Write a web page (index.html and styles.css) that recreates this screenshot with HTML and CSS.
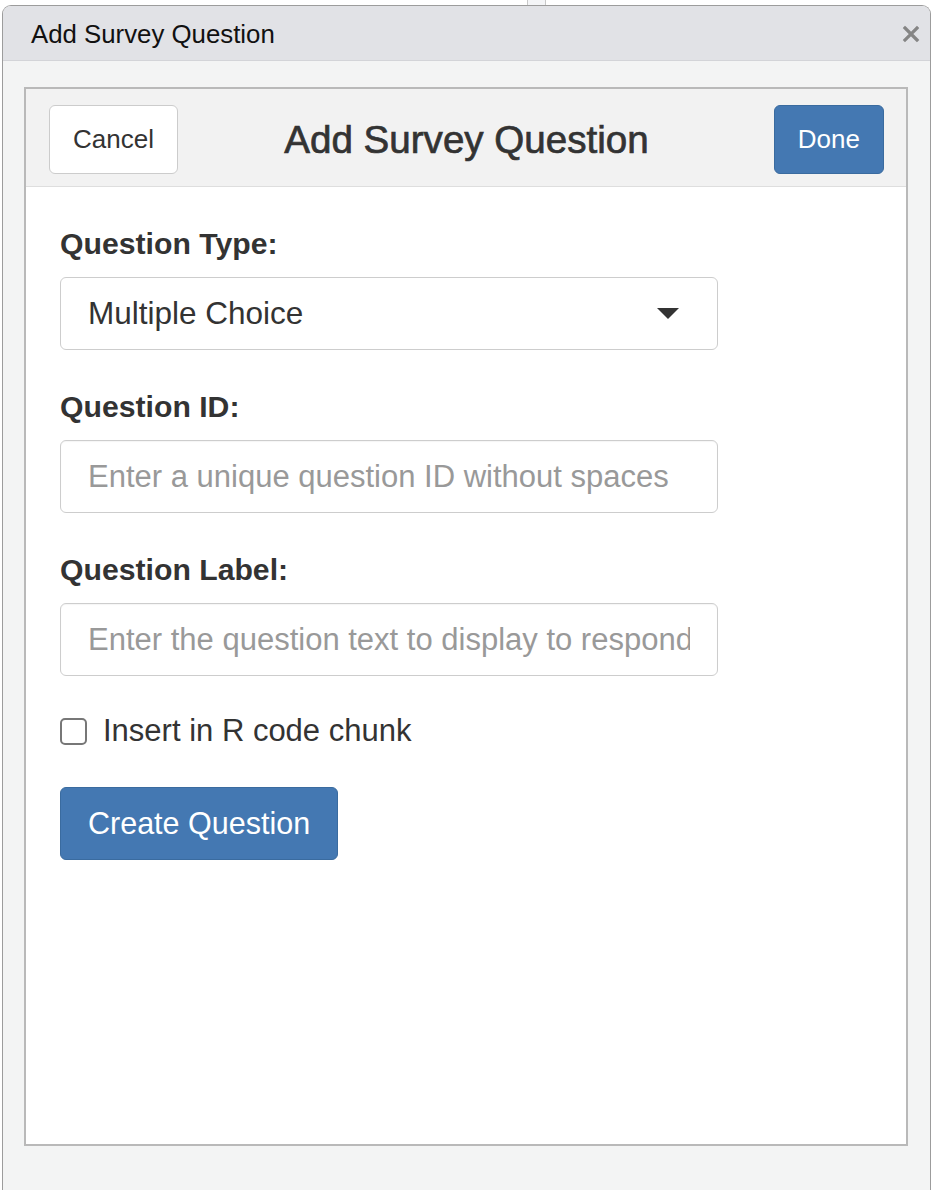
FILE: index.html
```html
<!DOCTYPE html>
<html lang="en">
<head>
  <meta charset="UTF-8">
  <title>Add Survey Question</title>
  <link rel="stylesheet" href="styles.css">
</head>
<body>
  <div class="backdrop"><span class="backdrop-tab"></span></div>

  <div class="dialog">
    <div class="dialog-titlebar">
      <span class="dialog-title">Add Survey Question</span>
      <svg class="dialog-close" width="18" height="18" viewBox="0 0 18 18">
        <path d="M3 3 L15 15 M15 3 L3 15" stroke="#858585" stroke-width="3.2" stroke-linecap="square"/>
      </svg>
    </div>

    <div class="dialog-body">
      <div class="gadget">
        <div class="gadget-header">
          <div class="gadget-left">
            <button class="btn btn-default">Cancel</button>
          </div>
          <h1 class="gadget-title">Add Survey Question</h1>
          <div class="gadget-right">
            <button class="btn btn-primary">Done</button>
          </div>
        </div>

        <div class="gadget-content">
          <div class="form-group">
            <label class="control-label">Question Type:</label>
            <div class="select-box">
              <span>Multiple Choice</span>
              <svg class="caret" width="22" height="11" viewBox="0 0 22 11">
                <path d="M0 0 L22 0 L11 11 Z" fill="#333"/>
              </svg>
            </div>
          </div>

          <div class="form-group">
            <label class="control-label" for="question-id">Question ID:</label>
            <input class="form-control" id="question-id" type="text" placeholder="Enter a unique question ID without spaces">
          </div>

          <div class="form-group">
            <label class="control-label" for="question-label">Question Label:</label>
            <input class="form-control" id="question-label" type="text" placeholder="Enter the question text to display to respondents">
          </div>

          <label class="checkbox">
            <input type="checkbox">
            <span>Insert in R code chunk</span>
          </label>

          <div>
            <button class="btn btn-primary btn-create">Create Question</button>
          </div>
        </div>
      </div>
    </div>
  </div>
</body>
</html>
```

FILE: styles.css
```css
html, body {
  margin: 0;
  padding: 0;
}

body {
  background: #fff;
  font-family: "Liberation Sans", Arial, sans-serif;
  color: #333;
  padding-left: 2px;
  height: 1190px;
  overflow: hidden;
}

/* strip of the window behind the dialog */
.backdrop {
  height: 5px;
  display: flex;
  padding-left: 525px;
}

.backdrop-tab {
  width: 17px;
  background: #f4f5f7;
  border-left: 1px solid #c8c8c8;
  border-right: 1px solid #c8c8c8;
}

.dialog {
  width: 929px;
  height: 1185px;
  box-sizing: border-box;
  border: 1px solid #9c9c9c;
  border-bottom: none;
  border-radius: 9px 9px 0 0;
  background: #f3f4f4;
  overflow: hidden;
  display: flex;
  flex-direction: column;
}

.dialog-titlebar {
  height: 55px;
  flex-shrink: 0;
  display: flex;
  align-items: center;
  justify-content: space-between;
  padding: 2px 10px 0 28px;
  box-sizing: border-box;
  background: #e1e2e6;
  border-bottom: 1px solid #d3d4d8;
}

.dialog-title {
  font-size: 25.8px;
  color: #111;
}

.dialog-close {
  display: block;
}

.dialog-body {
  padding: 26px 0 0 21px;
}

.gadget {
  width: 884px;
  height: 1059px;
  box-sizing: border-box;
  border: 2px solid #b9b9b9;
  background: #fff;
  display: flex;
  flex-direction: column;
}

.gadget-header {
  display: grid;
  grid-template-columns: 1fr auto 1fr;
  align-items: center;
  padding: 16px 22px 12px 23px;
  background: #f2f2f2;
  border-bottom: 1px solid #dedede;
}

.gadget-right {
  display: flex;
  justify-content: flex-end;
}

.gadget-title {
  margin: 0;
  font-size: 38.6px;
  font-weight: normal;
  -webkit-text-stroke: 0.7px #333;
  color: #333;
}

.btn {
  font-family: inherit;
  font-size: 26px;
  height: 69px;
  padding: 0 23px;
  border-radius: 6px;
  cursor: pointer;
}

.btn-default {
  background: #fff;
  color: #333;
  border: 1px solid #ccc;
}

.btn-primary {
  background: #4478b2;
  color: #fff;
  border: 1px solid #3a6b9f;
}

.gadget-content {
  padding: 37px 34px 0 34px;
}

.form-group {
  width: 658px;
  margin-bottom: 37px;
}

.control-label {
  display: block;
  font-size: 30.2px;
  font-weight: bold;
  line-height: 40px;
  margin-bottom: 13px;
}

.select-box,
.form-control {
  width: 100%;
  height: 73px;
  box-sizing: border-box;
  border: 1px solid #cdcdcd;
  border-radius: 6px;
  background: #fff;
  font-family: inherit;
  font-size: 31px;
  color: #333;
  padding: 0 27px;
}

.select-box {
  display: flex;
  align-items: center;
  justify-content: space-between;
  padding-right: 38px;
  font-size: 31.5px;
}

.caret {
  display: block;
}

.form-control {
  outline: none;
  box-shadow: inset 0 1px 1px rgba(0, 0, 0, 0.04);
}

.form-control::placeholder {
  color: #999;
}

.checkbox {
  display: flex;
  align-items: center;
  gap: 16px;
  font-size: 31px;
  line-height: 40px;
  margin: -2px 0 36px 0;
}

.checkbox input {
  appearance: none;
  -webkit-appearance: none;
  margin: 0;
  width: 27px;
  height: 27px;
  border: 2px solid #777;
  border-radius: 5px;
  background: #fff;
}

.btn-create {
  font-size: 30.5px;
  height: 73px;
  padding: 0 27px;
}
```
